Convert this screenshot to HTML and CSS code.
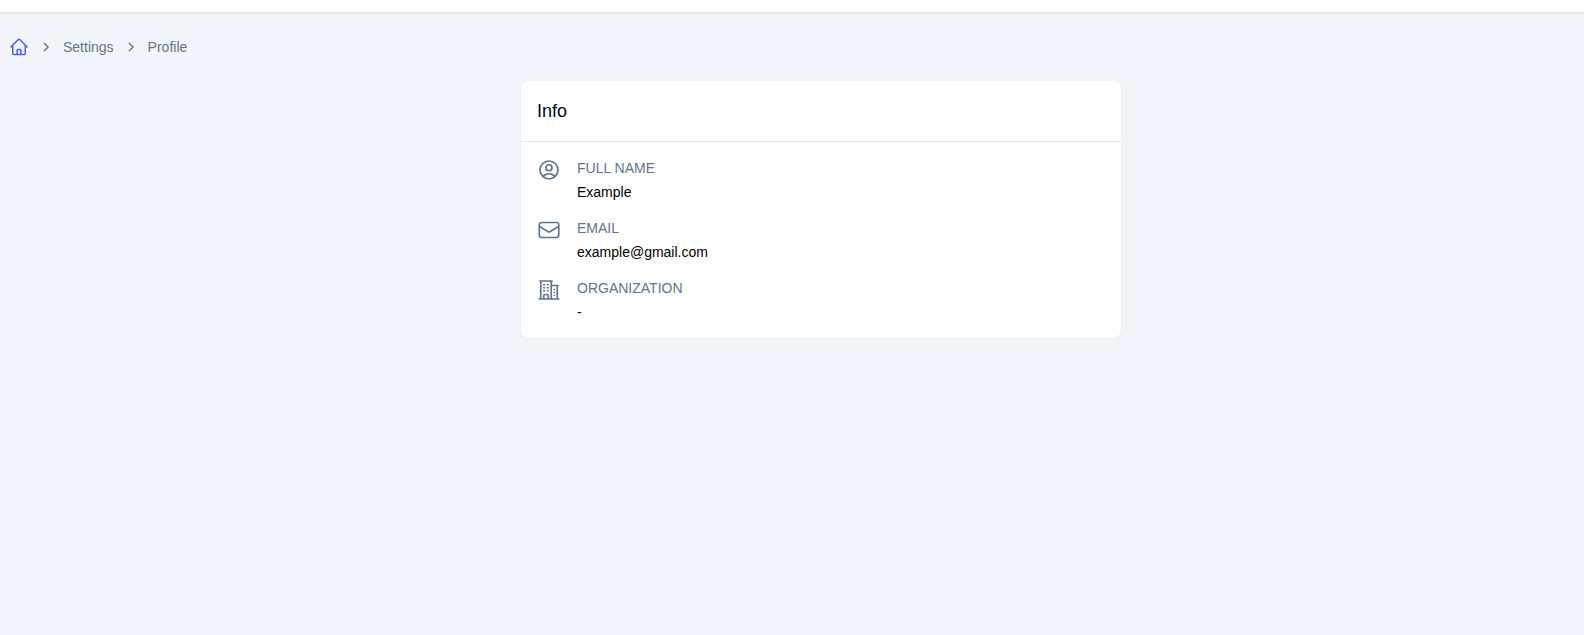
FILE: index.html
```html
<!DOCTYPE html>
<html lang="en">
<head>
<meta charset="utf-8">
<title>Profile</title>
<link rel="stylesheet" href="styles.css">
</head>
<body>
<header class="topbar"></header>
<nav class="crumbs">
  <svg class="home" viewBox="0 0 24 24" fill="none" stroke="currentColor" stroke-width="1.8" stroke-linecap="round" stroke-linejoin="round"><path d="M2.25 12l8.954-8.955c.44-.439 1.152-.439 1.591 0L21.75 12M4.5 9.75v10.125c0 .621.504 1.125 1.125 1.125H9.75v-4.875c0-.621.504-1.125 1.125-1.125h2.25c.621 0 1.125.504 1.125 1.125V21h4.125c.621 0 1.125-.504 1.125-1.125V9.75M8.25 21h8.25"/></svg>
  <svg class="chev" viewBox="0 0 20 20" fill="none" stroke="currentColor" stroke-width="2" stroke-linecap="round" stroke-linejoin="round"><path d="M7.5 4.5 13 10l-5.5 5.5"/></svg>
  <span>Settings</span>
  <svg class="chev" viewBox="0 0 20 20" fill="none" stroke="currentColor" stroke-width="2" stroke-linecap="round" stroke-linejoin="round"><path d="M7.5 4.5 13 10l-5.5 5.5"/></svg>
  <span>Profile</span>
</nav>
<main class="wrap">
  <section class="card">
    <h2 class="card-title">Info</h2>
    <div class="rows">
      <div class="row">
        <svg class="icon" viewBox="0 0 24 24" fill="none" stroke="currentColor" stroke-width="1.7" stroke-linecap="round" stroke-linejoin="round"><path d="M17.982 18.725A7.488 7.488 0 0012 15.75a7.488 7.488 0 00-5.982 2.975m11.963 0a9 9 0 10-11.963 0m11.963 0A8.966 8.966 0 0112 21a8.966 8.966 0 01-5.982-2.275M15 9.75a3 3 0 11-6 0 3 3 0 016 0z"/></svg>
        <div><div class="label">Full name</div><div class="value">Example</div></div>
      </div>
      <div class="row">
        <svg class="icon" viewBox="0 0 24 24" fill="none" stroke="currentColor" stroke-width="1.7" stroke-linecap="round" stroke-linejoin="round"><path d="M21.75 6.75v10.5a2.25 2.25 0 01-2.25 2.25h-15a2.25 2.25 0 01-2.25-2.25V6.75m19.5 0A2.25 2.25 0 0019.5 4.5h-15a2.25 2.25 0 00-2.25 2.25m19.5 0v.243a2.25 2.25 0 01-1.07 1.916l-7.5 4.615a2.25 2.25 0 01-2.36 0L3.32 8.91a2.25 2.25 0 01-1.07-1.916V6.75"/></svg>
        <div><div class="label">Email</div><div class="value">example@gmail.com</div></div>
      </div>
      <div class="row">
        <svg class="icon" viewBox="0 0 24 24" fill="none" stroke="currentColor" stroke-width="1.7" stroke-linecap="round" stroke-linejoin="round"><path d="M2.25 21h19.5m-18-18v18m10.5-18v18m6-13.5V21M6.75 6.75h.75m-.75 3h.75m-.75 3h.75m3-6h.75m-.75 3h.75m-.75 3h.75M6.75 21v-3.375c0-.621.504-1.125 1.125-1.125h2.25c.621 0 1.125.504 1.125 1.125V21M3 3h12m-.75 4.5H21m-3.75 3.75h.008v.008h-.008v-.008zm0 3h.008v.008h-.008v-.008zm0 3h.008v.008h-.008v-.008z"/></svg>
        <div><div class="label">Organization</div><div class="value">-</div></div>
      </div>
    </div>
  </section>
</main>
</body>
</html>
```
FILE: styles.css
```css
* { box-sizing: border-box; }
html, body { height: 100%; }
body {
  margin: 0;
  background: #f1f5f9;
  font-family: "Liberation Sans", Arial, sans-serif;
  font-size: 14px;
  line-height: 20px;
  color: #000;
  overflow: hidden;
}
.topbar {
  height: 12px;
  background: #fff;
  box-shadow: 0 1px 3px rgba(0, 0, 0, .1);
  margin-bottom: 25px;
}
.crumbs {
  display: flex;
  align-items: center;
  gap: 8px;
  height: 20px;
  padding-left: 9px;
  color: #64748b;
}
.home { width: 20px; height: 20px; color: #4f5ee6; }
.chev { width: 14px; height: 14px; margin: 0 2px 0 2px; }
.wrap {
  display: flex;
  justify-content: center;
  margin-top: 24px;
  padding-left: 58px;
}
.card {
  width: 600px;
  background: #fff;
  border-radius: 8px;
  box-shadow: 0 1px 3px rgba(0, 0, 0, .04);
}
.card-title {
  margin: 0;
  height: 61px;
  padding: 20px 16px 0;
  font-size: 18px;
  line-height: 20px;
  font-weight: 400;
  color: #020617;
  border-bottom: 1px solid #e2e8f0;
}
.rows {
  display: flex;
  flex-direction: column;
  gap: 16px;
  padding: 16px;
}
.row { display: flex; gap: 16px; }
.icon { flex: none; width: 24px; height: 24px; color: #64748b; }
.label { color: #64748b; text-transform: uppercase; }
.value { margin-top: 4px; }
```
